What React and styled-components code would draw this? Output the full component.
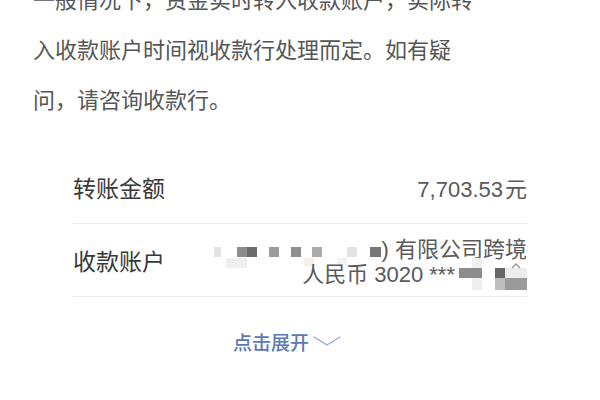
import React from "react";
import styled, { createGlobalStyle } from "styled-components";

const Global = createGlobalStyle`
  html, body { margin: 0; padding: 0; background: #ffffff; }
  body { overflow: hidden; font-family: "Liberation Sans", "Noto Sans CJK SC", sans-serif; }
`;

const Page = styled.div`
  width: 600px;
  height: 400px;
  overflow: hidden;
  background: #ffffff;
`;

const Notice = styled.p`
  margin: -27px 0 0 0;
  padding-left: 33px;
  font-family: "Noto Sans CJK SC", sans-serif;
  font-size: 22px;
  line-height: 50px;
  color: #555555;
  white-space: nowrap;
`;

const Details = styled.div`
  margin: 28px 73px 0 73px;
  display: flex;
  flex-direction: column;
`;

const Row = styled.div`
  display: flex;
  align-items: center;
  justify-content: space-between;
  height: 72px;
  border-bottom: 1px solid #ececec;
`;

const Label = styled.span`
  font-family: "Noto Sans CJK SC", sans-serif;
  font-size: 23px;
  color: #383838;
`;

const Amount = styled.span`
  font-family: "Liberation Sans", "Noto Sans CJK SC", sans-serif;
  font-size: 22px;
  color: #5a5a5a;
`;

const Unit = styled.span`
  font-family: "Noto Sans CJK SC", sans-serif;
  margin-left: 2px;
`;

const Account = styled.div`
  display: flex;
  flex-direction: column;
  align-items: flex-end;
  margin-top: -1px;
`;

const AccountLine = styled.div`
  display: flex;
  align-items: center;
  height: 25px;
  font-family: "Liberation Sans", "Noto Sans CJK SC", sans-serif;
  font-size: 22px;
  color: #5a5a5a;
  white-space: pre;
`;

const Mosaic = styled.svg`
  display: block;
  overflow: visible;
  flex: none;
`;

const Expand = styled.div`
  margin-top: 32px;
  padding-left: 233px;
  display: flex;
  align-items: center;
  gap: 3px;
  height: 24px;
`;

const ExpandText = styled.span`
  font-family: "Noto Sans CJK SC", sans-serif;
  font-size: 19px;
  font-weight: 500;
  color: #5b79b3;
`;

function NameMosaic() {
  return (
    <Mosaic width="173" height="25" viewBox="0 0 173 25">
      <rect x="17" y="23" width="21" height="10" fill="#f0f0f0" />
      <rect x="95" y="23" width="10" height="8" fill="#f0f0f0" />
      <rect x="128" y="23" width="10" height="7" fill="#f3f3f3" />
      <rect x="5" y="12" width="7" height="10" fill="#e2e2e2" />
      <rect x="28" y="12" width="10" height="10" fill="#8c8c8c" />
      <rect x="38" y="12" width="10" height="10" fill="#6c6c6c" />
      <rect x="60" y="12" width="10" height="10" fill="#9c9c9c" />
      <rect x="82" y="12" width="10" height="10" fill="#8e8e8e" />
      <rect x="103" y="12" width="10" height="10" fill="#ababab" />
      <rect x="138" y="12" width="10" height="10" fill="#e3e3e3" />
      <rect x="161" y="12" width="11" height="10" fill="#777777" />
    </Mosaic>
  );
}

function NumberMosaic() {
  return (
    <Mosaic width="72" height="25" viewBox="0 0 72 25">
      <rect x="17" y="-2" width="10" height="32" fill="#efefef" />
      <rect x="4" y="8" width="23" height="10" fill="#8c8c8c" />
      <rect x="40" y="8" width="10" height="10" fill="#666666" />
      <rect x="40" y="18" width="10" height="12" fill="#bdbdbd" />
      <rect x="50" y="18" width="22" height="12" fill="#9a9a9a" />
      <rect x="50" y="8" width="22" height="10" fill="#ededed" />
      <path d="M57 8 L61 4 L65 8" fill="none" stroke="#9a9a9a" strokeWidth="1.5" />
    </Mosaic>
  );
}

function Chevron() {
  return (
    <svg width="30" height="12" viewBox="0 0 30 12">
      <path d="M2 2 L15 10 L28 2" fill="none" stroke="#93a9d8" strokeWidth="1.4" strokeLinecap="round" strokeLinejoin="round" />
    </svg>
  );
}

export default function App() {
  return (
    <Page>
      <Global />
      <Notice>
        一般情况下，资金实时转入收款账户，实际转
        <br />
        入收款账户时间视收款行处理而定。如有疑
        <br />
        问，请咨询收款行。
      </Notice>
      <Details>
        <Row>
          <Label>转账金额</Label>
          <Amount>
            7,703.53<Unit>元</Unit>
          </Amount>
        </Row>
        <Row>
          <Label>收款账户</Label>
          <Account>
            <AccountLine>
              <NameMosaic />
              {") 有限公司跨境"}
            </AccountLine>
            <AccountLine>
              {"人民币 3020 ***"}
              <NumberMosaic />
            </AccountLine>
          </Account>
        </Row>
      </Details>
      <Expand>
        <ExpandText>点击展开</ExpandText>
        <Chevron />
      </Expand>
    </Page>
  );
}
